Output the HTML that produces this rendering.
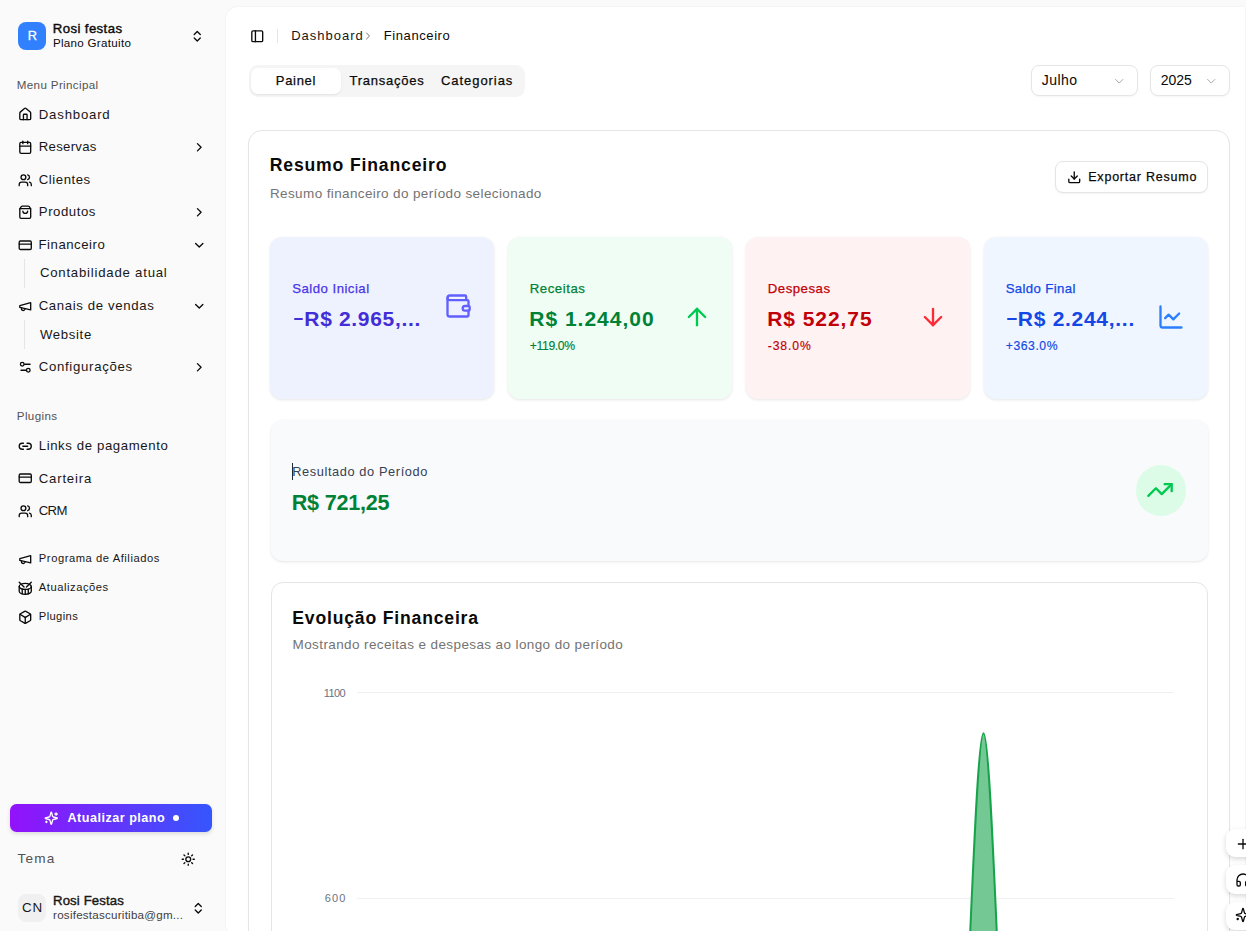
<!DOCTYPE html>
<html><head><meta charset="utf-8">
<style>
*{box-sizing:border-box;margin:0;padding:0}
html,body{width:1246px;height:931px;overflow:hidden}
body{background:#fafafa;font-family:"Liberation Sans",sans-serif;color:#0a0a0a;position:relative}
.t{position:absolute;white-space:nowrap;line-height:1}
.b{position:absolute}
svg.i{position:absolute;fill:none;stroke:currentColor;stroke-linecap:round;stroke-linejoin:round;overflow:visible}
</style></head><body>
<!-- sidebar -->
<div class="b" style="left:18px;top:22px;width:28px;height:28px;border-radius:8px;background:#3080ff"></div>
<div class="t" style="left:27.8px;top:29.5px;font-size:12.8px;color:#fff;-webkit-text-stroke:0.3px #fff">R</div>
<div class="b" style="left:24px;top:258.6px;width:1px;height:29.5px;background:#e5e5e5"></div>
<div class="b" style="left:24px;top:320px;width:1px;height:28.7px;background:#e5e5e5"></div>
<div class="b" style="left:10px;top:804px;width:202px;height:28px;border-radius:6.5px;background:linear-gradient(90deg,#9312fa,#3556fd);box-shadow:0 2px 4px rgba(0,0,0,.12)"></div>
<div class="b" style="left:172.6px;top:815px;width:6px;height:6px;border-radius:50%;background:#fff"></div>
<div class="b" style="left:18px;top:894px;width:28px;height:28px;border-radius:8px;background:#f0f0f0"></div>

<!-- main panel -->
<div class="b" style="left:226px;top:7px;width:1019px;height:930px;background:#fff;border-radius:12px 0 0 12px;box-shadow:0 0 2px rgba(0,0,0,.08)"></div>
<div class="b" style="left:277px;top:29px;width:1px;height:14px;background:#e5e5e5"></div>
<!-- tabs -->
<div class="b" style="left:248.5px;top:64.7px;width:276px;height:32.3px;border-radius:9px;background:#f5f5f5"></div>
<div class="b" style="left:251px;top:67.6px;width:89.6px;height:26.5px;border-radius:7px;background:#fff;box-shadow:0 1px 2px rgba(0,0,0,.08)"></div>
<!-- selects -->
<div class="b" style="left:1030.5px;top:65.3px;width:107px;height:31.2px;border-radius:8px;border:1px solid #e5e5e5;background:#fff;box-shadow:0 1px 2px rgba(0,0,0,.04)"></div>
<div class="b" style="left:1149.7px;top:65.3px;width:80px;height:31.2px;border-radius:8px;border:1px solid #e5e5e5;background:#fff;box-shadow:0 1px 2px rgba(0,0,0,.04)"></div>
<!-- outer card -->
<div class="b" style="left:248px;top:130px;width:982px;height:900px;border-radius:14px;border:1px solid #e5e5e5;background:#fff;box-shadow:0 1px 2px rgba(0,0,0,.04)"></div>
<div class="b" style="left:1055.2px;top:161.2px;width:152.5px;height:32.1px;border-radius:8px;border:1px solid #e5e5e5;background:#fff;box-shadow:0 1px 2px rgba(0,0,0,.05)"></div>
<!-- stat cards -->
<div class="b" style="left:270.3px;top:236.7px;width:224px;height:162.4px;border-radius:12px;background:#eef2ff;box-shadow:0 1px 3px rgba(0,0,0,.1)"></div>
<div class="b" style="left:507.9px;top:236.7px;width:224px;height:162.4px;border-radius:12px;background:#f0fdf4;box-shadow:0 1px 3px rgba(0,0,0,.1)"></div>
<div class="b" style="left:745.8px;top:236.7px;width:224px;height:162.4px;border-radius:12px;background:#fef2f2;box-shadow:0 1px 3px rgba(0,0,0,.1)"></div>
<div class="b" style="left:983.7px;top:236.7px;width:224.3px;height:162.4px;border-radius:12px;background:#eff6ff;box-shadow:0 1px 3px rgba(0,0,0,.1)"></div>
<div class="b" style="left:293.5px;top:317.5px;width:9.5px;height:2.7px;background:#432dd7;border-radius:1px"></div>
<div class="b" style="left:1007px;top:317.5px;width:9.5px;height:2.7px;background:#1447e6;border-radius:1px"></div>
<!-- resultado -->
<div class="b" style="left:270.5px;top:420px;width:937.5px;height:141.2px;border-radius:12px;background:#f9fafb;box-shadow:0 1px 3px rgba(0,0,0,.1)"></div>
<div class="b" style="left:292px;top:463.3px;width:1px;height:16.3px;background:#1f2937"></div>
<div class="b" style="left:1135.8px;top:465px;width:50.6px;height:50.6px;border-radius:50%;background:#dcfce7"></div>
<!-- chart card -->
<div class="b" style="left:271px;top:582.2px;width:937px;height:500px;border-radius:12px;border:1px solid #e5e5e5;background:#fff"></div>
<div class="b" style="left:357px;top:692px;width:817px;height:1px;background:#f0f0f0"></div>
<div class="b" style="left:357px;top:898px;width:817px;height:1px;background:#f0f0f0"></div>
<svg class="b" style="left:0;top:0" width="1246" height="931"><path d="M929.04 1145.7 L956.27 1145.7 C965.35 1145.7 974.42 733.2 983.5 733.2 C992.58 733.2 1001.65 1145.7 1010.73 1145.7 L1037.96 1145.7" fill="#74c893" stroke="#16a34a" stroke-width="2"/></svg>
<!-- floating -->
<div class="b" style="left:1225.7px;top:829.3px;width:40px;height:28px;border-radius:9px;background:#fff;box-shadow:0 2px 5px rgba(0,0,0,.16)"></div>
<div class="b" style="left:1225.7px;top:865.4px;width:40px;height:28.6px;border-radius:9px;background:#fff;box-shadow:0 2px 5px rgba(0,0,0,.16)"></div>
<div class="b" style="left:1225.7px;top:901.5px;width:40px;height:28.5px;border-radius:9px;background:#fff;box-shadow:0 2px 5px rgba(0,0,0,.16)"></div>

<svg class="i" style="left:18px;top:107.45px;color:#0a0a0a;" width="14.5" height="14.5" viewBox="0 0 24 24" stroke-width="2.2"><path d="M15 21v-8a1 1 0 0 0-1-1h-4a1 1 0 0 0-1 1v8"/><path d="M3 10a2 2 0 0 1 .709-1.528l7-5.999a2 2 0 0 1 2.582 0l7 5.999A2 2 0 0 1 21 10v9a2 2 0 0 1-2 2H5a2 2 0 0 1-2-2z"/></svg>
<svg class="i" style="left:18px;top:139.75px;color:#0a0a0a;" width="14.5" height="14.5" viewBox="0 0 24 24" stroke-width="2.2"><path d="M8 2v4"/><path d="M16 2v4"/><rect width="18" height="18" x="3" y="4" rx="2"/><path d="M3 10h18"/></svg>
<svg class="i" style="left:18px;top:172.75px;color:#0a0a0a;" width="14.5" height="14.5" viewBox="0 0 24 24" stroke-width="2.2"><path d="M16 21v-2a4 4 0 0 0-4-4H6a4 4 0 0 0-4 4v2"/><circle cx="9" cy="7" r="4"/><path d="M22 21v-2a4 4 0 0 0-3-3.87"/><path d="M16 3.13a4 4 0 0 1 0 7.75"/></svg>
<svg class="i" style="left:18px;top:204.75px;color:#0a0a0a;" width="14.5" height="14.5" viewBox="0 0 24 24" stroke-width="2.2"><path d="M16 10a4 4 0 0 1-8 0"/><path d="M3.103 6.034h17.794"/><path d="M3.4 5.467a2 2 0 0 0-.4 1.2V20a2 2 0 0 0 2 2h14a2 2 0 0 0 2-2V6.667a2 2 0 0 0-.4-1.2l-2-2.667A2 2 0 0 0 17 2H7a2 2 0 0 0-1.6.8z"/></svg>
<svg class="i" style="left:18px;top:237.75px;color:#0a0a0a;" width="14.5" height="14.5" viewBox="0 0 24 24" stroke-width="2.2"><rect width="20" height="14" x="2" y="5" rx="2"/><line x1="2" x2="22" y1="10" y2="10"/></svg>
<svg class="i" style="left:18px;top:298.8px;color:#0a0a0a;" width="14.5" height="14.5" viewBox="0 0 24 24" stroke-width="2.2"><path d="m3 11 18-5v12L3 14v-3z"/><path d="M11.6 16.8a3 3 0 1 1-5.8-1.6"/></svg>
<svg class="i" style="left:18px;top:359.75px;color:#0a0a0a;" width="14.5" height="14.5" viewBox="0 0 24 24" stroke-width="2.2"><path d="M20 7h-9"/><path d="M14 17H5"/><circle cx="17" cy="17" r="3"/><circle cx="7" cy="7" r="3"/></svg>
<svg class="i" style="left:18px;top:439.2px;color:#0a0a0a;" width="14.5" height="14.5" viewBox="0 0 24 24" stroke-width="2.2"><path d="M9 17H7A5 5 0 0 1 7 7h2"/><path d="M15 7h2a5 5 0 1 1 0 10h-2"/><line x1="8" x2="16" y1="12" y2="12"/></svg>
<svg class="i" style="left:18px;top:471px;color:#0a0a0a;" width="14.5" height="14.5" viewBox="0 0 24 24" stroke-width="2.2"><rect width="20" height="14" x="2" y="5" rx="2"/><line x1="2" x2="22" y1="10" y2="10"/></svg>
<svg class="i" style="left:18px;top:503.75px;color:#0a0a0a;" width="14.5" height="14.5" viewBox="0 0 24 24" stroke-width="2.2"><path d="M16 21v-2a4 4 0 0 0-4-4H6a4 4 0 0 0-4 4v2"/><circle cx="9" cy="7" r="4"/><path d="M22 21v-2a4 4 0 0 0-3-3.87"/><path d="M16 3.13a4 4 0 0 1 0 7.75"/></svg>
<svg class="i" style="left:18px;top:551.8px;color:#0a0a0a;" width="14.5" height="14.5" viewBox="0 0 24 24" stroke-width="2.2"><path d="m3 11 18-5v12L3 14v-3z"/><path d="M11.6 16.8a3 3 0 1 1-5.8-1.6"/></svg>
<svg class="i" style="left:18px;top:581px;color:#0a0a0a;" width="14.5" height="14.5" viewBox="0 0 24 24" stroke-width="2.2"><path d="m2 2 8 8"/><path d="m22 2-8 8"/><ellipse cx="12" cy="9" rx="10" ry="5"/><path d="M7 13.4v7.9"/><path d="M12 14v8"/><path d="M17 13.4v7.9"/><path d="M2 9v8a10 5 0 0 0 20 0V9"/></svg>
<svg class="i" style="left:18px;top:609.9px;color:#0a0a0a;" width="14.5" height="14.5" viewBox="0 0 24 24" stroke-width="2.2"><path d="M11 21.73a2 2 0 0 0 2 0l7-4A2 2 0 0 0 21 16V8a2 2 0 0 0-1-1.73l-7-4a2 2 0 0 0-2 0l-7 4A2 2 0 0 0 3 8v8a2 2 0 0 0 1 1.73z"/><path d="M12 22V12"/><path d="m3.3 7 7.703 4.734a2 2 0 0 0 1.994 0L20.7 7"/></svg>
<svg class="i" style="left:190.2px;top:28.8px;color:#0a0a0a;" width="14.5" height="14.5" viewBox="0 0 24 24" stroke-width="2.2"><path d="m7 15 5 5 5-5"/><path d="m7 9 5-5 5 5"/></svg>
<svg class="i" style="left:190.5px;top:901px;color:#0a0a0a;" width="14.5" height="14.5" viewBox="0 0 24 24" stroke-width="2.2"><path d="m7 15 5 5 5-5"/><path d="m7 9 5-5 5 5"/></svg>
<svg class="i" style="left:192px;top:140px;color:#0a0a0a;" width="14.5" height="14.5" viewBox="0 0 24 24" stroke-width="2.2"><path d="m9 18 6-6-6-6"/></svg>
<svg class="i" style="left:192px;top:204.75px;color:#0a0a0a;" width="14.5" height="14.5" viewBox="0 0 24 24" stroke-width="2.2"><path d="m9 18 6-6-6-6"/></svg>
<svg class="i" style="left:192px;top:359.75px;color:#0a0a0a;" width="14.5" height="14.5" viewBox="0 0 24 24" stroke-width="2.2"><path d="m9 18 6-6-6-6"/></svg>
<svg class="i" style="left:192px;top:238px;color:#0a0a0a;" width="14.5" height="14.5" viewBox="0 0 24 24" stroke-width="2.2"><path d="m6 9 6 6 6-6"/></svg>
<svg class="i" style="left:192px;top:299.3px;color:#0a0a0a;" width="14.5" height="14.5" viewBox="0 0 24 24" stroke-width="2.2"><path d="m6 9 6 6 6-6"/></svg>
<svg class="i" style="left:44.1px;top:811.2px;color:#fff;" width="14.5" height="14.5" viewBox="0 0 24 24" stroke-width="2.2"><path d="M9.937 15.5A2 2 0 0 0 8.5 14.063l-6.135-1.582a.5.5 0 0 1 0-.962L8.5 9.936A2 2 0 0 0 9.937 8.5l1.582-6.135a.5.5 0 0 1 .963 0L14.063 8.5A2 2 0 0 0 15.5 9.937l6.135 1.581a.5.5 0 0 1 0 .964L15.5 14.063a2 2 0 0 0-1.437 1.437l-1.582 6.135a.5.5 0 0 1-.963 0z"/><path d="M20 3v4"/><path d="M22 5h-4"/><path d="M4 17v2"/><path d="M5 18H3"/></svg>
<svg class="i" style="left:180.75px;top:852px;color:#0a0a0a;" width="14.5" height="14.5" viewBox="0 0 24 24" stroke-width="2.2"><circle cx="12" cy="12" r="4"/><path d="M12 2v2"/><path d="M12 20v2"/><path d="m4.93 4.93 1.41 1.41"/><path d="m17.66 17.66 1.41 1.41"/><path d="M2 12h2"/><path d="M20 12h2"/><path d="m6.34 17.66-1.41 1.41"/><path d="m19.07 4.93-1.41 1.41"/></svg>
<svg class="i" style="left:249.75px;top:28.85px;color:#0a0a0a;" width="14.5" height="14.5" viewBox="0 0 24 24" stroke-width="2.2"><rect width="18" height="18" x="3" y="3" rx="2"/><path d="M9 3v18"/></svg>
<svg class="i" style="left:362.1px;top:29.85px;color:#737373;" width="12" height="12" viewBox="0 0 24 24" stroke-width="2"><path d="m9 18 6-6-6-6"/></svg>
<svg class="i" style="left:1112px;top:73.75px;color:#a3a3a3;" width="14.5" height="14.5" viewBox="0 0 24 24" stroke-width="1.6"><path d="m6 9 6 6 6-6"/></svg>
<svg class="i" style="left:1203.9px;top:73.75px;color:#a3a3a3;" width="14.5" height="14.5" viewBox="0 0 24 24" stroke-width="1.6"><path d="m6 9 6 6 6-6"/></svg>
<svg class="i" style="left:1066.75px;top:169.65px;color:#0a0a0a;" width="14.5" height="14.5" viewBox="0 0 24 24" stroke-width="2.2"><path d="M12 15V3"/><path d="M21 15v4a2 2 0 0 1-2 2H5a2 2 0 0 1-2-2v-4"/><path d="m7 10 5 5 5-5"/></svg>
<svg class="i" style="left:443.5px;top:292px;color:#615fff;" width="28" height="28" viewBox="0 0 24 24" stroke-width="2"><path d="M19 7V4a1 1 0 0 0-1-1H5a2 2 0 0 0 0 4h15a1 1 0 0 1 1 1v4h-3a2 2 0 0 0 0 4h3a1 1 0 0 0 1-1v-2a1 1 0 0 0-1-1"/><path d="M3 5v14a2 2 0 0 0 2 2h15a1 1 0 0 0 1-1v-4"/></svg>
<svg class="i" style="left:682.5px;top:303.3px;color:#00c950;" width="28" height="28" viewBox="0 0 24 24" stroke-width="2"><path d="m5 12 7-7 7 7"/><path d="M12 19V5"/></svg>
<svg class="i" style="left:919.4px;top:303.3px;color:#fb2c36;" width="28" height="28" viewBox="0 0 24 24" stroke-width="2"><path d="M12 5v14"/><path d="m19 12-7 7-7-7"/></svg>
<svg class="i" style="left:1157px;top:303.2px;color:#2b7fff;" width="28" height="28" viewBox="0 0 24 24" stroke-width="2"><path d="M3 3v16a2 2 0 0 0 2 2h16"/><path d="m19 9-5 5-4-4-3 3"/></svg>
<svg class="i" style="left:1146.3px;top:476.2px;color:#00c950;" width="28" height="28" viewBox="0 0 24 24" stroke-width="2"><polyline points="22 7 13.5 15.5 8.5 10.5 2 17"/><polyline points="16 7 22 7 22 13"/></svg>
<svg class="i" style="left:1235px;top:836px;color:#0a0a0a;" width="16" height="16" viewBox="0 0 24 24" stroke-width="2"><path d="M5 12h14"/><path d="M12 5v14"/></svg>
<svg class="i" style="left:1235px;top:871.5px;color:#0a0a0a;" width="16" height="16" viewBox="0 0 24 24" stroke-width="2"><path d="M3 14h3a2 2 0 0 1 2 2v3a2 2 0 0 1-2 2H5a2 2 0 0 1-2-2v-7a9 9 0 0 1 18 0v7a2 2 0 0 1-2 2h-1a2 2 0 0 1-2-2v-3a2 2 0 0 1 2-2h3"/></svg>
<svg class="i" style="left:1235px;top:907px;color:#0a0a0a;" width="16" height="16" viewBox="0 0 24 24" stroke-width="2"><path d="M9.937 15.5A2 2 0 0 0 8.5 14.063l-6.135-1.582a.5.5 0 0 1 0-.962L8.5 9.936A2 2 0 0 0 9.937 8.5l1.582-6.135a.5.5 0 0 1 .963 0L14.063 8.5A2 2 0 0 0 15.5 9.937l6.135 1.581a.5.5 0 0 1 0 .964L15.5 14.063a2 2 0 0 0-1.437 1.437l-1.582 6.135a.5.5 0 0 1-.963 0z"/><path d="M20 3v4"/><path d="M22 5h-4"/><path d="M4 17v2"/><path d="M5 18H3"/></svg>
<div class="t" id="s_name" style="left:52.81px;top:21.63px;font-size:13.2px;font-weight:normal;color:#0a0a0a;letter-spacing:0.395px;-webkit-text-stroke:0.4px #0a0a0a;">Rosi festas</div>
<div class="t" id="s_plan" style="left:52.90px;top:37.18px;font-size:11.6px;font-weight:normal;color:#0a0a0a;letter-spacing:0.297px;">Plano Gratuito</div>
<div class="t" id="s_menu" style="left:16.80px;top:78.68px;font-size:11.6px;font-weight:normal;color:#525252;letter-spacing:0.354px;">Menu Principal</div>
<div class="t" id="n0" style="left:38.81px;top:107.83px;font-size:13.2px;font-weight:normal;color:#171717;letter-spacing:0.796px;">Dashboard</div>
<div class="t" id="n1" style="left:38.81px;top:140.43px;font-size:13.2px;font-weight:normal;color:#171717;letter-spacing:0.269px;">Reservas</div>
<div class="t" id="n2" style="left:38.81px;top:172.83px;font-size:13.2px;font-weight:normal;color:#171717;letter-spacing:0.533px;">Clientes</div>
<div class="t" id="n3" style="left:38.81px;top:204.83px;font-size:13.2px;font-weight:normal;color:#171717;letter-spacing:0.555px;">Produtos</div>
<div class="t" id="n4" style="left:38.51px;top:237.93px;font-size:13.2px;font-weight:normal;color:#171717;letter-spacing:0.523px;">Financeiro</div>
<div class="t" id="n5" style="left:39.91px;top:265.83px;font-size:13.2px;font-weight:normal;color:#171717;letter-spacing:0.776px;">Contabilidade atual</div>
<div class="t" id="n6" style="left:38.71px;top:299.03px;font-size:13.2px;font-weight:normal;color:#171717;letter-spacing:0.634px;">Canais de vendas</div>
<div class="t" id="n7" style="left:39.91px;top:327.63px;font-size:13.2px;font-weight:normal;color:#171717;letter-spacing:0.663px;">Website</div>
<div class="t" id="n8" style="left:38.71px;top:360.03px;font-size:13.2px;font-weight:normal;color:#171717;letter-spacing:0.703px;">Configurações</div>
<div class="t" id="n9" style="left:38.71px;top:438.63px;font-size:13.2px;font-weight:normal;color:#171717;letter-spacing:0.606px;">Links de pagamento</div>
<div class="t" id="n10" style="left:38.71px;top:471.83px;font-size:13.2px;font-weight:normal;color:#171717;letter-spacing:0.811px;">Carteira</div>
<div class="t" id="n11" style="left:38.71px;top:503.73px;font-size:13.2px;font-weight:normal;color:#171717;letter-spacing:-0.681px;">CRM</div>
<div class="t" id="s_plug" style="left:16.80px;top:410.38px;font-size:11.6px;font-weight:normal;color:#525252;letter-spacing:0.377px;">Plugins</div>
<div class="t" id="m0" style="left:38.83px;top:552.52px;font-size:11.2px;font-weight:normal;color:#171717;letter-spacing:0.555px;">Programa de Afiliados</div>
<div class="t" id="m1" style="left:38.83px;top:582.22px;font-size:11.2px;font-weight:normal;color:#171717;letter-spacing:0.537px;">Atualizações</div>
<div class="t" id="m2" style="left:38.83px;top:611.32px;font-size:11.2px;font-weight:normal;color:#171717;letter-spacing:0.373px;">Plugins</div>
<div class="t" id="s_upg" style="left:67.44px;top:812.33px;font-size:12.6px;font-weight:bold;color:#ffffff;letter-spacing:0.503px;">Atualizar plano</div>
<div class="t" id="s_tema" style="left:17.48px;top:852.39px;font-size:13.6px;font-weight:normal;color:#525252;letter-spacing:1.194px;">Tema</div>
<div class="t" id="s_cn" style="left:21.90px;top:900.66px;font-size:13.4px;font-weight:normal;color:#171717;letter-spacing:0.964px;">CN</div>
<div class="t" id="s_user" style="left:53.01px;top:893.83px;font-size:13.2px;font-weight:normal;color:#171717;letter-spacing:0.116px;-webkit-text-stroke:0.4px #171717;">Rosi Festas</div>
<div class="t" id="s_mail" style="left:53.10px;top:909.08px;font-size:11.6px;font-weight:normal;color:#404040;letter-spacing:0.233px;">rosifestascuritiba@gm...</div>
<div class="t" id="h_dash" style="left:291.22px;top:29.00px;font-size:13px;font-weight:normal;color:#171717;letter-spacing:0.994px;">Dashboard</div>
<div class="t" id="h_fin" style="left:383.72px;top:29.00px;font-size:13px;font-weight:normal;color:#0a0a0a;letter-spacing:0.595px;">Financeiro</div>
<div class="t" id="tb0" style="left:275.82px;top:74.00px;font-size:13px;font-weight:normal;color:#0a0a0a;letter-spacing:0.684px;-webkit-text-stroke:0.25px #0a0a0a;">Painel</div>
<div class="t" id="tb1" style="left:349.52px;top:74.00px;font-size:13px;font-weight:normal;color:#0a0a0a;letter-spacing:0.758px;-webkit-text-stroke:0.25px #0a0a0a;">Transações</div>
<div class="t" id="tb2" style="left:441.02px;top:74.00px;font-size:13px;font-weight:normal;color:#0a0a0a;letter-spacing:0.943px;-webkit-text-stroke:0.25px #0a0a0a;">Categorias</div>
<div class="t" id="sel0" style="left:1041.86px;top:73.35px;font-size:14px;font-weight:normal;color:#0a0a0a;letter-spacing:0.428px;">Julho</div>
<div class="t" id="sel1" style="left:1160.66px;top:73.35px;font-size:14px;font-weight:normal;color:#0a0a0a;letter-spacing:-0.025px;">2025</div>
<div class="t" id="c_title" style="left:269.74px;top:156.90px;font-size:17.6px;font-weight:bold;color:#0a0a0a;letter-spacing:0.839px;">Resumo Financeiro</div>
<div class="t" id="c_sub" style="left:269.99px;top:186.87px;font-size:13.5px;font-weight:normal;color:#737373;letter-spacing:0.376px;">Resumo financeiro do período selecionado</div>
<div class="t" id="c_exp" style="left:1088.25px;top:171.42px;font-size:12.5px;font-weight:normal;color:#0a0a0a;letter-spacing:0.781px;-webkit-text-stroke:0.25px #0a0a0a;">Exportar Resumo</div>
<div class="t" id="cl0" style="left:292.21px;top:282.23px;font-size:13.2px;font-weight:normal;color:#4a35e8;letter-spacing:0.481px;-webkit-text-stroke:0.25px #4a35e8;">Saldo Inicial</div>
<div class="t" id="cv0" style="left:304.34px;top:307.82px;font-size:21px;font-weight:bold;color:#432dd7;letter-spacing:0.667px;">R$ 2.965,...</div>
<div class="t" id="cl1" style="left:529.71px;top:282.23px;font-size:13.2px;font-weight:normal;color:#008236;letter-spacing:0.553px;-webkit-text-stroke:0.25px #008236;">Receitas</div>
<div class="t" id="cv1" style="left:529.24px;top:307.82px;font-size:21px;font-weight:bold;color:#008236;letter-spacing:0.998px;">R$ 1.244,00</div>
<div class="t" id="cp1" style="left:529.77px;top:340.47px;font-size:12.2px;font-weight:normal;color:#008236;letter-spacing:-0.366px;-webkit-text-stroke:0.15px #008236;">+119.0%</div>
<div class="t" id="cl2" style="left:767.71px;top:282.23px;font-size:13.2px;font-weight:normal;color:#c10007;letter-spacing:0.533px;-webkit-text-stroke:0.25px #c10007;">Despesas</div>
<div class="t" id="cv2" style="left:767.24px;top:307.82px;font-size:21px;font-weight:bold;color:#c10007;letter-spacing:0.937px;">R$ 522,75</div>
<div class="t" id="cp2" style="left:767.77px;top:340.47px;font-size:12.2px;font-weight:normal;color:#c10007;letter-spacing:0.868px;-webkit-text-stroke:0.15px #c10007;">-38.0%</div>
<div class="t" id="cl3" style="left:1005.71px;top:282.23px;font-size:13.2px;font-weight:normal;color:#1447e6;letter-spacing:0.370px;-webkit-text-stroke:0.25px #1447e6;">Saldo Final</div>
<div class="t" id="cv3" style="left:1017.84px;top:307.82px;font-size:21px;font-weight:bold;color:#1447e6;letter-spacing:0.713px;">R$ 2.244,...</div>
<div class="t" id="cp3" style="left:1005.77px;top:340.47px;font-size:12.2px;font-weight:normal;color:#1447e6;letter-spacing:0.552px;-webkit-text-stroke:0.15px #1447e6;">+363.0%</div>
<div class="t" id="r_lab" style="left:292.23px;top:465.96px;font-size:12.8px;font-weight:normal;color:#364153;letter-spacing:0.597px;">Resultado do Período</div>
<div class="t" id="r_val" style="left:291.70px;top:492.42px;font-size:21.6px;font-weight:bold;color:#008236;letter-spacing:-0.221px;">R$ 721,25</div>
<div class="t" id="e_title" style="left:292.34px;top:609.90px;font-size:17.6px;font-weight:bold;color:#0a0a0a;letter-spacing:0.810px;">Evolução Financeira</div>
<div class="t" id="e_sub" style="left:292.59px;top:638.37px;font-size:13.5px;font-weight:normal;color:#737373;letter-spacing:0.389px;">Mostrando receitas e despesas ao longo do período</div>
<div class="t" id="y1" style="left:323.84px;top:688.29px;font-size:11px;font-weight:normal;color:#6a7282;letter-spacing:-0.612px;">1100</div>
<div class="t" id="y2" style="left:324.84px;top:892.59px;font-size:11px;font-weight:normal;color:#6a7282;letter-spacing:1.130px;">600</div>
</body></html>
